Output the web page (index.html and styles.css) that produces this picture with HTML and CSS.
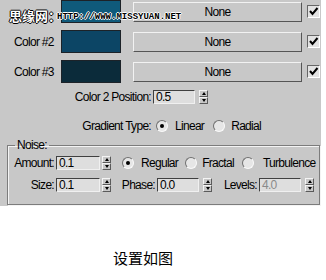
FILE: index.html
```html
<!DOCTYPE html>
<html lang="zh-CN">
<head>
    <meta charset="UTF-8">
    <title>Gradient Parameters</title>
    <link rel="stylesheet" href="styles.css">
</head>
<body>

    <div class="panel">
        <div class="color-row">
            <span class="color-label"></span>
            <div class="swatch c1"></div>
            <div class="btn">None</div>
            <div class="check"><svg width="11" height="11" viewBox="0 0 11 11"><path d="M2 5 L4.5 8 L9.5 2" fill="none" stroke="#000" stroke-width="2"/></svg></div>
        </div>
        <div class="color-row">
            <span class="color-label">Color #2</span>
            <div class="swatch c2"></div>
            <div class="btn">None</div>
            <div class="check"><svg width="11" height="11" viewBox="0 0 11 11"><path d="M2 5 L4.5 8 L9.5 2" fill="none" stroke="#000" stroke-width="2"/></svg></div>
        </div>
        <div class="color-row">
            <span class="color-label">Color #3</span>
            <div class="swatch c3"></div>
            <div class="btn">None</div>
            <div class="check"><svg width="11" height="11" viewBox="0 0 11 11"><path d="M2 5 L4.5 8 L9.5 2" fill="none" stroke="#000" stroke-width="2"/></svg></div>
        </div>

        <div class="field-row pos-row">
            <span class="field-label">Color 2 Position:</span>
            <div class="num w42">0.5</div>
            <span class="spin ml4"><i class="up"></i><i class="dn"></i></span>
        </div>

        <div class="field-row type-row">
            <span class="field-label">Gradient Type:</span>
            <span class="radio on ml5"></span><span class="opt ml7">Linear</span>
            <span class="radio ml9"></span><span class="opt ml6">Radial</span>
        </div>

        <fieldset class="noise">
            <legend>Noise:</legend>
            <div class="field-row amount-row">
                <span class="small-label">Amount:</span>
                <div class="num w44">0.1</div>
                <span class="spin ml2"><i class="up"></i><i class="dn"></i></span>
                <span class="radio on ml11"></span><span class="opt ml7">Regular</span>
                <span class="radio ml7"></span><span class="opt ml5">Fractal</span>
                <span class="radio ml8"></span><span class="opt ml9">Turbulence</span>
            </div>
            <div class="field-row size-row">
                <span class="small-label">Size:</span>
                <div class="num w44">0.1</div>
                <span class="spin ml2"><i class="up"></i><i class="dn"></i></span>
                <span class="small-label w44">Phase:</span>
                <div class="num w42">0.0</div>
                <span class="spin ml4"><i class="up"></i><i class="dn"></i></span>
                <span class="small-label w45">Levels:</span>
                <div class="num w42 disabled">4.0</div>
                <span class="spin ml4"><i class="up"></i><i class="dn"></i></span>
            </div>
        </fieldset>

        <div class="watermark"><span class="wm-cn">思缘网：</span><span class="wm-url">HTTP://WWW.MISSYUAN.NET</span></div>
    </div>

    <div class="caption">设置如图</div>

</body>
</html>
```

FILE: styles.css
```css
body {
    margin: 0;
    background: #fff;
    font-family: "Liberation Sans", Arial, sans-serif;
    font-size: 12px;
    letter-spacing: -0.7px;
    color: #000;
}
.panel {
    position: relative;
    width: 321px;
    height: 206px;
    background: #c8c8c8;
    overflow: hidden;
}
.color-row {
    display: flex;
    align-items: center;
    height: 23px;
    margin-bottom: 7px;
}
.color-label {
    width: 61px;
    padding-left: 14px;
    box-sizing: border-box;
    white-space: nowrap;
}
.swatch {
    width: 60px;
    height: 23px;
    box-sizing: border-box;
    border: 1px solid #1c2228;
}
.c1 { background: #0f5a7b; }
.c2 { background: #0c4565; }
.c3 { background: #0b2b3a; }
.btn {
    margin-left: 12px;
    width: 169px;
    height: 20px;
    box-sizing: border-box;
    border: 1px solid;
    border-color: #f2f2f2 #555 #555 #f2f2f2;
    display: flex;
    align-items: center;
    justify-content: center;
}
.check {
    margin-left: 5px;
    width: 13px;
    height: 13px;
    box-sizing: border-box;
    border: 1px solid;
    border-color: #666 #fff #fff #666;
    background: #e2e2e2;
    display: flex;
    align-items: center;
    justify-content: center;
}
.field-row {
    display: flex;
    align-items: center;
    height: 14px;
    white-space: nowrap;
}
.pos-row { margin-top: 1px; }
.type-row { margin-top: 15px; }
.field-label {
    width: 151px;
    text-align: right;
}
.small-label {
    width: 46px;
    text-align: right;
}
.num {
    margin-left: 2px;
    height: 14px;
    box-sizing: border-box;
    border: 1px solid;
    border-color: #404040 #f0f0f0 #f0f0f0 #404040;
    background: #dedede;
    padding-left: 2px;
    line-height: 12px;
}
.num.disabled { color: #8a8a8a; }
.w42 { width: 42px; }
.w44 { width: 44px; }
.small-label.w44 { width: 44px; }
.small-label.w45 { width: 45px; }
.spin {
    display: flex;
    flex-direction: column;
    width: 9px;
    height: 14px;
}
.spin i {
    flex: 1;
    box-sizing: border-box;
    border: 1px solid;
    border-color: #f4f4f4 #5a5a5a #5a5a5a #f4f4f4;
    background: #c8c8c8;
    display: flex;
    align-items: center;
    justify-content: center;
}
.spin .up::after {
    content: "";
    border-left: 2px solid transparent;
    border-right: 2px solid transparent;
    border-bottom: 3px solid #000;
}
.spin .dn::after {
    content: "";
    border-left: 2px solid transparent;
    border-right: 2px solid transparent;
    border-top: 3px solid #000;
}
.radio {
    width: 12px;
    height: 12px;
    box-sizing: border-box;
    border-radius: 50%;
    border: 1px solid;
    border-color: #707070 #fafafa #fafafa #707070;
    background: #e6e6e6;
    display: flex;
    align-items: center;
    justify-content: center;
}
.radio.on::after {
    content: "";
    width: 4px;
    height: 4px;
    border-radius: 50%;
    background: #000;
}
.ml2 { margin-left: 2px; }
.ml4 { margin-left: 4px; }
.ml5 { margin-left: 5px; }
.ml6 { margin-left: 6px; }
.ml7 { margin-left: 7px; }
.ml8 { margin-left: 8px; }
.ml9 { margin-left: 9px; }
.ml11 { margin-left: 11px; }
.noise {
    margin: 5px 0 0 7px;
    padding: 0;
    width: 313px;
    height: 67px;
    box-sizing: border-box;
    border: 1px solid #7c7c7c;
    box-shadow: inset 1px 1px 0 #f4f4f4, 1px 1px 0 #f4f4f4;
}
.noise legend {
    margin-left: 7px;
    padding: 0 2px;
    line-height: 14px;
}
.amount-row { margin-top: 4px; }
.size-row { margin-top: 8px; }
.watermark {
    position: absolute;
    left: 9px;
    top: 6px;
    display: flex;
    align-items: center;
    letter-spacing: 0;
    white-space: nowrap;
}
.wm-cn {
    font-family: "Noto Sans CJK SC", sans-serif;
    font-size: 13px;
    font-weight: bold;
    color: #fff;
    text-shadow: 1px 0 0 #000, -1px 0 0 #000, 0 1px 0 #000, 0 -1px 0 #000;
}
.wm-url {
    font-family: "Liberation Mono", monospace;
    font-size: 9px;
    font-weight: bold;
    color: #000;
    margin-left: -4px;
    padding-top: 3px;
    text-shadow: 1px 0 0 #fff, -1px 0 0 #fff, 0 1px 0 #fff, 0 -1px 0 #fff;
}
.caption {
    margin-top: 42px;
    padding-left: 113px;
    font-family: "Noto Sans CJK SC", sans-serif;
    font-size: 15px;
    letter-spacing: 0;
    line-height: 20px;
}
```
